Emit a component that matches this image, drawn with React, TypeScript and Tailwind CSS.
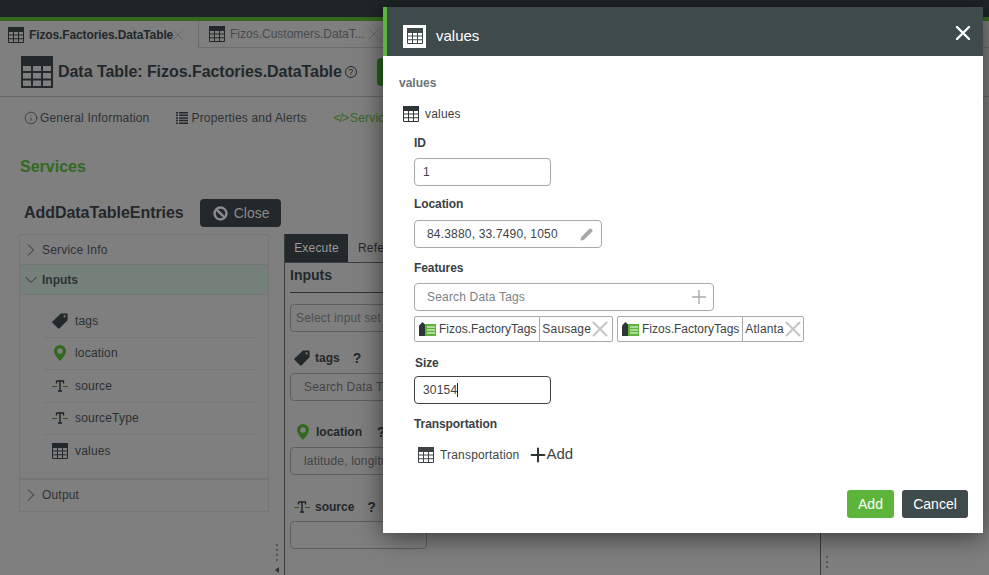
import { Info, Pencil, Plus, X } from "lucide-react";

function TableIcon({ size = 16, className = "" }: { size?: number; className?: string }) {
  return (
    <svg width={size} height={size} viewBox="0 0 16 16" className={`shrink-0 ${className}`} fill="none">
      <rect x="0" y="0" width="16" height="4" fill="currentColor" />
      <path d="M.5 .5H15.5V15.5H.5ZM.5 4.5H15.5M.5 8H15.5M.5 11.75H15.5M5.5 4V16M10.5 4V16" stroke="currentColor" strokeWidth="1" />
    </svg>
  );
}

function TagIcon({ className = "" }: { className?: string }) {
  return (
    <svg width="16" height="16" viewBox="0 0 16 16" className={`shrink-0 ${className}`}>
      <path
        fillRule="evenodd"
        d="M9 .5H15a.6 .6 0 0 1 .6 .6V7.2L7.4 15.5a.8 .8 0 0 1-1.1 0L.4 9.7a.8 .8 0 0 1 0-1.1ZM12.6 2.2a1 1 0 1 0 .01 0Z"
        fill="currentColor"
      />
    </svg>
  );
}

function PinIcon({ className = "" }: { className?: string }) {
  return (
    <svg width="12" height="16" viewBox="0 0 12 16" className={`shrink-0 ${className}`}>
      <path
        fillRule="evenodd"
        d="M6 0a6 6 0 0 1 6 6C12 9.5 8 13.5 6 16 4 13.5 0 9.5 0 6a6 6 0 0 1 6-6ZM6 3.2a2.8 2.8 0 1 0 .01 0Z"
        fill="currentColor"
      />
    </svg>
  );
}

function TextTypeIcon({ className = "" }: { className?: string }) {
  return (
    <svg width="16" height="12" viewBox="0 0 16 12" className={`shrink-0 ${className}`}>
      <path d="M0 6.5H5M11 6.5H16" stroke="#2f5a28" strokeWidth="1" />
      <path d="M4.5 1H11.5V3.5M4.5 1V3.5M8 1V11M6 11H10" stroke="#1f2326" strokeWidth="1.4" fill="none" />
    </svg>
  );
}

function ListIcon() {
  return (
    <svg width="12" height="12" viewBox="0 0 12 12" className="shrink-0" fill="#23282b">
      <path d="M0 0H2V1.5H0ZM3 0H12V1.5H3ZM0 2.6H2V4.1H0ZM3 2.6H12V4.1H3ZM0 5.2H2V6.7H0ZM3 5.2H12V6.7H3ZM0 7.8H2V9.3H0ZM3 7.8H12V9.3H3ZM0 10.4H2V11.9H0ZM3 10.4H12V11.9H3Z" />
    </svg>
  );
}

function ChevronIcon({ open }: { open?: boolean }) {
  return open ? (
    <svg width="16" height="16" viewBox="0 0 16 16" className="shrink-0" fill="none" stroke="#2e3235">
      <path d="M2.5 5 8 10.5 13.5 5" />
    </svg>
  ) : (
    <svg width="16" height="16" viewBox="0 0 16 16" className="shrink-0" fill="none" stroke="#2e3235">
      <path d="M5 2.5 10.5 8 5 13.5" />
    </svg>
  );
}

function ChipIcon() {
  return (
    <svg width="17" height="14" viewBox="0 0 17 14" className="shrink-0">
      <path d="M3.5 0 7 3.5V14H0V3.5Z" fill="#2f3638" />
      <rect x="6" y="2" width="11" height="12" fill="#5cb53a" />
      <path d="M8 5H16M8 8H16M8 11H16" stroke="#fff" strokeWidth="1" />
    </svg>
  );
}

function Tab({ label, active }: { label: string; active?: boolean }) {
  return (
    <div
      className={`flex items-center h-[27px] shrink-0 ${
        active ? "w-[198px] pl-2 font-bold" : "w-[190px] pl-[10px] border-l border-b border-[#6c6c6c] text-[#474b4d]"
      }`}
    >
      <TableIcon className="text-[#22272a]" />
      <span className={`ml-[5px] text-xs ${active ? "tracking-[-0.12px]" : ""}`}>{label}</span>
      <X size={20} strokeWidth={1} className={active ? "-ml-[5px] text-[#666]" : "-ml-[1px] text-[#666]"} />
    </div>
  );
}

function SideItem({ icon, label, last }: { icon: React.ReactNode; label: string; last?: boolean }) {
  return (
    <div className={`ml-[24px] mr-[11px] pl-[5px] h-[32.5px] flex items-center text-xs ${last ? "" : "border-b border-[#777]"}`}>
      <span className="w-[22px] flex justify-center">{icon}</span>
      <span className="ml-1 text-[#2b3033]">{label}</span>
    </div>
  );
}

function BackgroundPage() {
  return (
    <div className="text-[#23282b]">
      <div className="h-[17px] bg-[#1f2427]" />
      <div className="h-[4px] bg-[#33691f]" />
      <div className="flex">
        <Tab label="Fizos.Factories.DataTable" active />
        <Tab label="Fizos.Customers.DataT..." />
        <div className="flex-1 border-b border-[#6c6c6c]" />
      </div>

      <div className="h-[49px] border-b border-[#666] pl-[21px] flex items-center">
        <TableIcon size={32} className="text-[#23282b]" />
        <span className="ml-[5px] text-base font-bold tracking-[-0.05px]">Data Table: Fizos.Factories.DataTable</span>
        <span className="ml-[3px] w-3 h-3 rounded-full border border-[#23282b] text-[9px] leading-[10px] text-center">?</span>
        <span className="ml-5 w-[40px] h-[28px] rounded bg-[#25601a]" />
      </div>

      <div className="flex items-center h-[18px] mt-[12px] pl-[24px] text-xs text-[#2e3235] tracking-[0.18px]">
        <Info size={14} strokeWidth={1.3} />
        <span className="ml-[2px]">General Information</span>
        <span className="ml-[27px]"><ListIcon /></span>
        <span className="ml-[3px]">Properties and Alerts</span>
        <span className="ml-[27px] text-[#33691f] tracking-[-1px]">&lt;/&gt;</span>
        <span className="ml-[2px] text-[#33691f]">Services</span>
      </div>

      <div className="ml-5 mt-[30px] text-base font-bold leading-5 text-[#33691f]">Services</div>

      <div className="flex items-center ml-6 mt-[22px] h-7">
        <span className="text-base font-bold tracking-[-0.05px]">AddDataTableEntries</span>
        <div className="ml-4 w-[81px] h-7 rounded bg-[#23282b] flex items-center pl-[13px] text-sm text-[#8b8b8b]">
          <svg width="15" height="15" viewBox="0 0 15 15" fill="none" stroke="#8b8b8b" strokeWidth="2.4">
            <circle cx="7.5" cy="7.5" r="6" />
            <path d="M3.3 3.3 11.7 11.7" />
          </svg>
          <span className="ml-[6px]">Close</span>
        </div>
      </div>

      <div className="flex mt-[7px] ml-[19px] h-[400px]">
        <div className="w-[250px] self-start border border-[#757575] text-xs tracking-[0.18px]">
          <div className="h-[30px] flex items-center pl-[3px] border-b border-[#757575] text-[#2e3235]">
            <ChevronIcon />
            <span className="ml-[3px]">Service Info</span>
          </div>
          <div className="h-[30px] flex items-center pl-[3px] border-b border-[#757575] bg-[#76807a] font-bold text-[#2e3235] tracking-normal">
            <ChevronIcon open />
            <span className="ml-[3px]">Inputs</span>
          </div>
          <div className="pt-[10px] pb-[10px] border-b-2 border-[#757575]">
            <SideItem icon={<TagIcon />} label="tags" />
            <SideItem icon={<PinIcon className="text-[#33691f]" />} label="location" />
            <SideItem icon={<TextTypeIcon />} label="source" />
            <SideItem icon={<TextTypeIcon />} label="sourceType" />
            <SideItem icon={<TableIcon />} label="values" last />
          </div>
          <div className="h-[31px] flex items-center pl-[3px] text-[#2e3235]">
            <ChevronIcon />
            <span className="ml-[3px]">Output</span>
          </div>
        </div>

        <div className="w-[15px] shrink-0 flex flex-col items-center pt-[310px] gap-[3px]">
          <span className="w-[2px] h-[2px] bg-[#555]" />
          <span className="w-[2px] h-[2px] bg-[#555]" />
          <span className="w-[2px] h-[2px] bg-[#555]" />
          <span className="w-[2px] h-[2px] bg-[#555]" />
          <span className="mt-[3px] w-0 h-0 border-y-[3px] border-y-transparent border-r-[4px] border-r-[#333]" />
          <span className="mt-[3px] w-[2px] h-[2px] bg-[#555]" />
          <span className="w-[2px] h-[2px] bg-[#555]" />
        </div>

        <div className="w-[537px] border-l border-r border-[#3a3f42]">
          <div className="flex items-center h-[29px] text-xs border-b border-[#3a3f42] tracking-[0.18px]">
            <span className="w-[63px] h-full flex items-center justify-center bg-[#23282b] text-[#9a9a9a]">Execute</span>
            <span className="ml-[10px]">Refe</span>
          </div>
          <div className="pl-[5px]">
            <div className="text-sm font-bold h-[30px] leading-[24px] border-b border-[#2e3235]">Inputs</div>
            <div className="mt-[11px] h-[28px] border border-[#5f5f5f] rounded flex items-center pl-[5px] text-xs text-[#4c4f51] tracking-[0.18px]">Select input set</div>
            <div className="mt-[17px] h-[18px] pl-[4px] flex items-center text-xs font-bold gap-[5px]">
              <TagIcon /> tags <span className="ml-2 text-sm">?</span>
            </div>
            <div className="mt-[6px] h-[28px] border border-[#5f5f5f] rounded flex items-center pl-[13px] text-xs text-[#444] tracking-[0.18px]">Search Data Tags</div>
            <div className="mt-[22px] h-[18px] pl-[7px] flex items-center text-xs font-bold gap-[7px]">
              <PinIcon className="text-[#33691f]" /> location <span className="ml-2 text-sm">?</span>
            </div>
            <div className="mt-[6px] h-[28px] border border-[#5f5f5f] rounded flex items-center pl-[13px] text-xs text-[#444] tracking-[0.18px]">latitude, longitude</div>
            <div className="mt-[23px] h-[18px] pl-[4px] flex items-center text-xs font-bold gap-[5px]">
              <TextTypeIcon /> source <span className="ml-2 text-sm">?</span>
            </div>
            <div className="mt-[5px] w-[137px] h-[28px] border border-[#5f5f5f] rounded" />
          </div>
        </div>

        <div className="ml-[5px] flex flex-col gap-[3px] pt-[322px]">
          <span className="w-[2px] h-[2px] bg-[#555]" />
          <span className="w-[2px] h-[2px] bg-[#555]" />
          <span className="w-[2px] h-[2px] bg-[#555]" />
        </div>
      </div>
    </div>
  );
}

function Label({ children, className = "" }: { children: React.ReactNode; className?: string }) {
  return <div className={`text-xs font-bold leading-[15px] tracking-[-0.08px] text-[#3a4144] ${className}`}>{children}</div>;
}

function Chip({ tag, value, w }: { tag: string; value: string; w: string }) {
  return (
    <div className={`h-[26px] flex items-center border border-[#a9a9a9] rounded-[2px] text-xs text-[#3d4346] ${w}`}>
      <span className="ml-[4px]"><ChipIcon /></span>
      <span className="ml-[3px] pr-[3px] h-full flex items-center border-r border-[#a9a9a9] tracking-normal">{tag}</span>
      <span className="ml-[2px]">{value}</span>
      <X size={26} strokeWidth={1.8} className="-ml-[4px] -mr-[6px] text-[#c4c4c4]" />
    </div>
  );
}

function ValuesModal() {
  return (
    <div className="absolute left-[383px] top-[7px] w-[600px] h-[526px] bg-white flex flex-col tracking-[0.18px] shadow-[0_4px_24px_rgba(0,0,0,0.55)]">
      <div className="h-[49px] shrink-0 bg-[#3f4a4d] border-l-4 border-[#5cb53a] flex items-center pt-[9px] pl-4 pr-[8px] text-white">
        <div className="w-[23px] h-[23px] bg-white flex items-center justify-center">
          <TableIcon className="text-[#3f4a4d]" />
        </div>
        <span className="ml-[10px] mt-px text-[15px] tracking-normal">values</span>
        <X size={24} strokeWidth={2.4} className="ml-auto -mt-[6px]" />
      </div>

      <div className="flex-1 pl-4 pt-[20px] text-xs">
        <div className="font-bold leading-[15px] tracking-normal text-[#6c7478]">values</div>
        <div className="flex items-center h-4 ml-[4px] mt-[15px] text-[#3d4346]">
          <TableIcon className="text-[#2f3638]" />
          <span className="ml-[6px]">values</span>
        </div>

        <div className="ml-[15px]">
          <Label className="mt-[14px]">ID</Label>
          <div className="mt-[7px] w-[137px] h-[28px] border border-[#a9a9a9] rounded flex items-center pl-2 text-[#3d4346]">1</div>

          <Label className="mt-[11px]">Location</Label>
          <div className="mt-[8px] w-[188px] h-[28px] border border-[#a9a9a9] rounded flex items-center pl-3 pr-2 text-[#3d4346]">
            84.3880, 33.7490, 1050
            <Pencil size={13} className="ml-auto text-[#a9a9a9] fill-[#a9a9a9]" />
          </div>

          <Label className="mt-[13px]">Features</Label>
          <div className="mt-[7px] w-[300px] h-[28px] border border-[#a9a9a9] rounded flex items-center pl-3 pr-[3px] text-[#7b8285]">
            Search Data Tags
            <Plus size={22} strokeWidth={1.5} className="ml-auto text-[#a9a9a9]" />
          </div>
          <div className="flex gap-1 mt-[5px]">
            <Chip tag="Fizos.FactoryTags" value="Sausage" w="w-[199px]" />
            <Chip tag="Fizos.FactoryTags" value="Atlanta" w="w-[187px]" />
          </div>

          <Label className="mt-[14px] ml-px">Size</Label>
          <div className="mt-[5px] w-[137px] h-[28px] border border-[#3d4346] rounded flex items-center pl-2 text-[#3d4346]">
            30154<span className="w-px h-[14px] bg-[#222]" />
          </div>

          <Label className="mt-[13px]">Transportation</Label>
          <div className="flex items-center mt-[13px] h-5 ml-1">
            <TableIcon className="text-[#3d4346]" />
            <span className="ml-[6px] text-[#3d4346]">Transportation</span>
            <Plus size={22} strokeWidth={2.2} className="ml-[8px] -mr-[3px] text-[#2f3638]" />
            <span className="text-[15px] tracking-normal text-[#3d4346] -mt-[2px]">Add</span>
          </div>
        </div>
      </div>

      <div className="flex justify-end gap-2 pr-[15px] pb-[15px] text-sm tracking-normal text-white">
        <div className="w-[47px] h-[28px] rounded-[3px] bg-[#5cb53a] flex items-center justify-center">Add</div>
        <div className="w-[66px] h-[28px] rounded-[3px] bg-[#3f4a4d] flex items-center justify-center">Cancel</div>
      </div>
    </div>
  );
}

export default function App() {
  return (
    <div className="relative w-[989px] h-[575px] overflow-hidden bg-[#7f7f7f] font-['Liberation_Sans',Arial,sans-serif]">
      <BackgroundPage />
      <ValuesModal />
    </div>
  );
}
